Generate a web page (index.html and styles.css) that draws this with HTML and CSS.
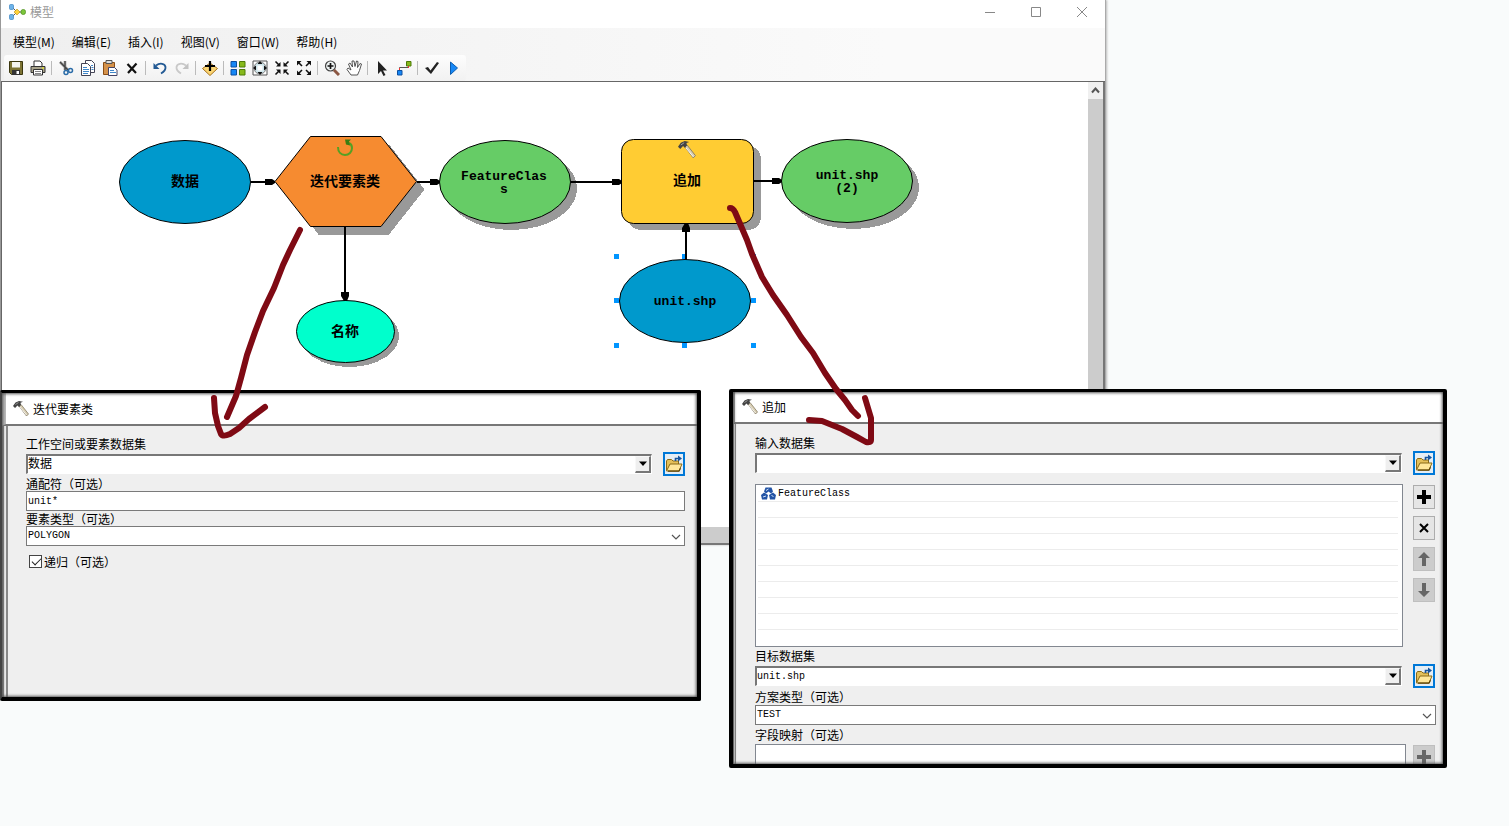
FILE: index.html
```html
<!DOCTYPE html>
<html lang="zh-CN">
<head>
<meta charset="utf-8">
<title>模型</title>
<link rel="stylesheet" href="styles.css">
</head>
<body>
<svg class="defs" width="0" height="0" aria-hidden="true">
  <symbol id="hammer" viewBox="0 0 16 16">
    <path d="M6 5l2-1.500 7.500 9.500-2 2z" fill="#d9cfb4" stroke="#857b63" stroke-width=".8"/>
    <path d="M7 6l6.500 8" stroke="#fff" stroke-width=".8"/>
    <path d="M0 5l2.500-3.500L6 0l4 .8-2.500 1L8 4 6 6 4.500 4.500 2 7z" fill="#444"/>
    <path d="M2.500 3.500l3-2" stroke="#aaa" stroke-width=".8"/>
  </symbol>
  <symbol id="folder" viewBox="0 0 18 18">
    <path d="M1.500 15.500V6l1-1.500h4L8 6h5.500v3" fill="#e4c05a" stroke="#8a6a16"/>
    <path d="M1.500 16L5 9h12l-3 7z" fill="#ffe79a" stroke="#8a6a16"/>
    <path d="M3 16.200h11l1.500-3" fill="none" stroke="#5d4408" stroke-width="1.200"/>
    <path d="M10.500 6V3.500H14" fill="none" stroke="#17549c" stroke-width="1.600"/>
    <path d="M13 .5l4 3-4 3z" fill="#17549c"/>
  </symbol>
  <symbol id="down" viewBox="0 0 10 6"><path d="M1 .5h8L5 5z" fill="#000"/></symbol>
  <symbol id="chevron" viewBox="0 0 10 6"><path d="M1 1l4 4 4-4" fill="none" stroke="#555" stroke-width="1.200"/></symbol>
</svg>

<main class="desktop">
  <section class="window" aria-label="模型">
    <header class="titlebar">
      <svg class="app-icon" width="17" height="16" viewBox="0 0 17 16">
        <path d="M3 3l5 5-5 5M8 8h6" fill="none" stroke="#555"/>
        <rect x=".5" y=".5" width="4" height="5" rx="1" fill="#6db3ea" stroke="#3c84c0" stroke-width=".7"/>
        <rect x=".5" y="10.500" width="4" height="5" rx="1" fill="#6db3ea" stroke="#3c84c0" stroke-width=".7"/>
        <path d="M8 5l3 3-3 3-3-3z" fill="#ffd23c" stroke="#b8901a" stroke-width=".6"/>
        <rect x="12" y="5.500" width="4.500" height="5" rx="2" fill="#7cc63b" stroke="#4b8c1a" stroke-width=".7"/>
      </svg>
      <h1 class="title muted">模型</h1>
      <div class="window-controls">
        <button aria-label="最小化"><svg width="12" height="12"><path d="M1 6.500h10" stroke="#888"/></svg></button>
        <button aria-label="最大化"><svg width="12" height="12"><path d="M1.500 1.500h9v9h-9z" fill="none" stroke="#888"/></svg></button>
        <button aria-label="关闭"><svg width="12" height="12"><path d="M1 1l10 10M11 1L1 11" stroke="#888"/></svg></button>
      </div>
    </header>
    <nav class="menubar">
      <button>模型(M)</button><button>编辑(E)</button><button>插入(I)</button><button>视图(V)</button><button>窗口(W)</button><button>帮助(H)</button>
    </nav>
    <div class="toolstrip">
    <div class="toolbar">
      <button aria-label="保存"><svg viewBox="0 0 16 16"><path d="M1.500 1.500h13v13h-11l-2-2z" fill="#7d7434" stroke="#3b370f"/><path d="M4 2h8v5.500H4z" fill="#f5f5f0"/><path d="M4 10h8v5H4z" fill="#333"/><path d="M8.500 11H11v3H8.500z" fill="#fff"/></svg></button>
      <button aria-label="打印"><svg viewBox="0 0 16 16"><path d="M4 7V1h6l2 2v4" fill="#fff" stroke="#333"/><path d="M1 6.500h14v6H1z" fill="#a9a48c" stroke="#333"/><path d="M3.500 9.500h9v5.500h-9z" fill="#fff" stroke="#333"/><path d="M5 11.500h6M5 13.500h6" stroke="#666" stroke-width=".8"/><path d="M12 8h2" stroke="#ff0"/></svg></button>
      <i class="sep"></i>
      <button aria-label="剪切"><svg viewBox="0 0 16 16"><path d="M2 2l8 8M7 1v9" stroke="#999" stroke-width="2.600"/><path d="M2 2l8 8M7 1v9" stroke="#444" stroke-width="1.200"/><circle cx="8" cy="12.500" r="2" fill="none" stroke="#2b6ca8" stroke-width="1.500"/><circle cx="12.500" cy="10.500" r="2" fill="none" stroke="#2b6ca8" stroke-width="1.500"/></svg></button>
      <button aria-label="复制"><svg viewBox="0 0 16 16"><path d="M5.500.5h6l3 3v9h-9z" fill="#fff" stroke="#445"/><path d="M1.500 3.500h6l3 3v9h-9z" fill="#fff" stroke="#445"/><path d="M3 7.500h4M3 9.500h6M3 11.500h6M3 13.500h5" stroke="#3f86c9"/><path d="M11 5.500h2M11.500 7.500h2M11.500 9.500h2" stroke="#3f86c9"/></svg></button>
      <button aria-label="粘贴"><svg viewBox="0 0 16 16"><path d="M1.500 2.500h11v12h-11z" fill="#d5924a" stroke="#8a4d14"/><path d="M4 .5h6v3H4z" fill="#ddd" stroke="#555"/><path d="M6.500 7.500h6l2.500 2.500v5.500H6.500z" fill="#fff" stroke="#446"/><path d="M8 10.500h4M8 12.500h6" stroke="#3f86c9"/></svg></button>
      <button aria-label="删除"><svg viewBox="0 0 16 16"><path d="M3.500 4L12 13M12.500 3.500L4 13" stroke="#111" stroke-width="2.200"/></svg></button>
      <i class="sep"></i>
      <button aria-label="撤消"><svg viewBox="0 0 16 16"><path d="M4 5.500c4-3 9-2 9.500 1.500.3 3-2 5-4.500 6.500" fill="none" stroke="#235a94" stroke-width="1.800"/><path d="M1.500 3v6h6z" fill="#235a94"/></svg></button>
      <button aria-label="恢复" disabled><svg viewBox="0 0 16 16"><path d="M12 5.500C8 2.500 3 3.500 2.500 7c-.3 3 2 5 4.500 6.500" fill="none" stroke="#c9c9c9" stroke-width="1.800"/><path d="M14.500 3v6h-6z" fill="#c2c2c2"/></svg></button>
      <i class="sep"></i>
      <button aria-label="添加数据"><svg viewBox="0 0 16 16"><path d="M8 3l7.500 5.500L8 15.500.5 8.500z" fill="#fbd572" stroke="#a5701d"/><path d="M8 1v10M3 6h10" stroke="#000" stroke-width="2.200"/></svg></button>
      <i class="sep"></i>
      <button aria-label="自动布局"><svg viewBox="0 0 16 16"><path d="M1 1.500h5.500V7H1zM1 9.500h5.500V15H1z" fill="#1687f5" stroke="#0c4fa0"/><path d="M9.500 1.500H15V7H9.500zM9.500 9.500H15V15H9.500z" fill="#86b91b" stroke="#4d7a08"/></svg></button>
      <button aria-label="全图"><svg viewBox="0 0 16 16"><path d="M1 1h14v14H1z" fill="#fff" stroke="#555"/><circle cx="8" cy="8" r="6" fill="#cfe5ea" stroke="#888"/><path d="M8 1l2.500 3h-5zM8 15l2.500-3h-5zM1 8l3-2.500v5zM15 8l-3-2.500v5z" fill="#111"/><path d="M5.500 5.500h5v5h-5z" fill="#fff"/></svg></button>
      <button aria-label="固定缩小"><svg viewBox="0 0 16 16"><path d="M1.500 1.500l4 4M14.500 1.500l-4 4M1.500 14.500l4-4M14.500 14.500l-4-4" stroke="#111" stroke-width="1.600"/><path d="M6.500 2v4.500H2zM9.500 2v4.500H14zM6.500 14V9.500H2zM9.500 14V9.500H14z" fill="#111"/></svg></button>
      <button aria-label="固定放大"><svg viewBox="0 0 16 16"><path d="M2 2l4 4M14 2l-4 4M2 14l4-4M14 14l-4-4" stroke="#111" stroke-width="1.600"/><path d="M1 1h4.500L1 5.500zM15 1h-4.500L15 5.500zM1 15h4.500L1 10.500zM15 15h-4.500l4.500-4.500z" fill="#111"/></svg></button>
      <i class="sep"></i>
      <button aria-label="放大"><svg viewBox="0 0 16 16"><circle cx="6.500" cy="6" r="5" fill="#eef3f3" stroke="#444" stroke-width="1.200"/><path d="M10 10l5 5" stroke="#8b5742" stroke-width="3"/><path d="M6.500 3v6M3.500 6h6" stroke="#111" stroke-width="1.700"/></svg></button>
      <button aria-label="平移"><svg viewBox="0 0 16 16"><path d="M5 15L1 9.500 2 8l3 2-2.500-6L4 3l2.500 4-.500-6L8 1l1 5.500L10.500 1l1.500.5-.500 6L14 3.500l1.500.5-2 6.500-2 4.500z" fill="#fff" stroke="#444" stroke-width=".9"/></svg></button>
      <i class="sep"></i>
      <button aria-label="选择"><svg viewBox="0 0 16 16"><path d="M4 1v13l3-3 2.500 5 2-1L9 10.500h4z" fill="#222"/></svg></button>
      <button aria-label="连接"><svg viewBox="0 0 16 16"><path d="M3.500 10V7.500h9V6" fill="none" stroke="#555"/><path d="M1.500 10.500H6V15H1.500z" fill="#1687f5" stroke="#0c4fa0"/><path d="M10.500 1.500H15V6h-4.500z" fill="#86b91b" stroke="#4d7a08"/><path d="M3.500 8v2M12.500 6v2" stroke="#e33" fill="none"/></svg></button>
      <i class="sep"></i>
      <button aria-label="验证"><svg viewBox="0 0 16 16"><path d="M1 8l3-1 2.500 3.500L13 2l2 1-8 11z" fill="#222"/></svg></button>
      <button aria-label="运行"><svg viewBox="0 0 16 16"><path d="M4.500 2l7 6-7 6.500z" fill="#1687f5" stroke="#0c5cae"/></svg></button>
    </div>
    </div>
    <div class="workspace">
      <div class="canvas">
        <svg class="diagram" width="100%" height="100%">
          <g transform="translate(-2 -82)">
            <g class="shadow">
              <path d="M283 189.500L318.500 144.500H389L424.500 189.500L389 234.500H318.500z"/>
              <ellipse cx="349.500" cy="336" rx="49.500" ry="31"/>
              <ellipse cx="511.500" cy="188.500" rx="65.500" ry="41.500"/>
              <rect x="628" y="146" width="133" height="84" rx="13"/>
              <ellipse cx="853.500" cy="187.500" rx="65.500" ry="41.500"/>
            </g>
            <g class="handles">
              <path d="M614 254h5v5h-5zM682 254h5v5h-5zM751 254h5v5h-5zM614 298h5v5h-5zM751 298h5v5h-5zM614 343h5v5h-5zM682 343h5v5h-5zM751 343h5v5h-5z"/>
            </g>
            <g class="shapes">
              <ellipse cx="185" cy="182" rx="65.500" ry="41.500" fill="#0099cc"/>
              <path d="M275 181.500L310.500 136.500H381L416.500 181.500L381 226.500H310.500z" fill="#f68b30"/>
              <ellipse cx="345.500" cy="331.500" rx="49" ry="31" fill="#00ffcc"/>
              <ellipse cx="505" cy="182" rx="65.500" ry="41.500" fill="#66cc66"/>
              <rect x="621.500" y="139.500" width="132" height="84" rx="12" fill="#ffcc33"/>
              <ellipse cx="847" cy="181" rx="65.500" ry="41.500" fill="#66cc66"/>
              <ellipse cx="685" cy="301" rx="65.500" ry="41.500" fill="#0099cc"/>
            </g>
            <g class="links">
              <path d="M251 182h18M417 182h18M571 182h45M754 181h22M345 227v66M686 260v-30"/>
            </g>
            <g class="heads">
              <path d="M275 181v2l-3 2h-7v-6h7zM440 181v2l-3 2h-7v-6h7zM622 181v2l-3 2h-7v-6h7zM782 180v2l-3 2h-7v-6h7zM344 301h3l2-5v-4h-8v4zM685 223h3l2 5v4h-8v-4z"/>
            </g>
            <path d="M338 147c0 5 3 8 7 8s7-3 7-7c0-3-1-4-3-5" fill="none" stroke="#55a024" stroke-width="2"/>
            <path d="M345 139.500h6l-2 2 1 4-4-1z" fill="#3b7d12"/>
            <use href="#hammer" x="678" y="141" width="18" height="18"/>
            <g class="cjk">
              <text x="185" y="186">数据</text>
              <text x="345" y="186">迭代要素类</text>
              <text x="345" y="336">名称</text>
              <text x="687" y="185">追加</text>
            </g>
            <g class="latin">
              <text x="504" y="180">FeatureClas</text>
              <text x="504" y="193">s</text>
              <text x="847" y="179">unit.shp</text>
              <text x="847" y="192">(2)</text>
              <text x="685" y="305">unit.shp</text>
            </g>
          </g>
        </svg>
      </div>
      <div class="vscroll">
        <button aria-label="向上滚动"><svg width="9" height="7"><path d="M1 5.500l3.500-4 3.500 4" fill="none" stroke="#555" stroke-width="2"/></svg></button>
        <div class="thumb"></div>
      </div>
      <div class="hscroll"></div>
    </div>
  </section>

  <section class="dialog iterate" aria-label="迭代要素类">
    <header class="dialog-title"><svg width="16" height="16"><use href="#hammer"/></svg><h2 class="title">迭代要素类</h2></header>
    <form class="form">
      <label class="tall" for="ws">工作空间或要素数据集</label>
      <div class="row">
        <div class="combo"><input class="zh" id="ws" value="数据"><button type="button" aria-label="展开"><svg width="10" height="6"><use href="#down"/></svg></button></div>
        <button class="browse" type="button" aria-label="浏览"><svg width="18" height="18"><use href="#folder"/></svg></button>
      </div>
      <label for="wild">通配符（可选）</label>
      <input class="field" id="wild" value="unit*">
      <label for="ftype">要素类型（可选）</label>
      <div class="select"><select class="field" id="ftype"><option>POLYGON</option></select><svg width="10" height="6"><use href="#chevron"/></svg></div>
      <div class="check"><input type="checkbox" id="rec" checked><label for="rec">递归（可选）</label></div>
    </form>
  </section>

  <section class="dialog append" aria-label="追加">
    <header class="dialog-title"><svg width="16" height="16"><use href="#hammer"/></svg><h2 class="title">追加</h2></header>
    <form class="form">
      <label class="tall" for="in">输入数据集</label>
      <div class="row">
        <div class="combo"><input id="in" value=""><button type="button" aria-label="展开"><svg width="10" height="6"><use href="#down"/></svg></button></div>
        <button class="browse" type="button" aria-label="浏览"><svg width="18" height="18"><use href="#folder"/></svg></button>
      </div>
      <div class="list-row">
        <ul class="list">
          <li><svg width="15" height="13" viewBox="0 0 15 13"><path d="M4.500.5h6l1.500 4-2 2-2.500-2-2.500 2-2-2zM0 8l3-2.500L7 8l-1 4.500H1zM15 8l-3-2.500L8 8l1 4.500h5z" fill="#2354a6"/><path d="M5 3.500l2.500-1.500M2 10l3-1M10.500 8l2 2" stroke="#cfe0f7"/></svg>FeatureClass</li>
          <li></li><li></li><li></li><li></li><li></li><li></li><li></li><li></li><li></li>
        </ul>
        <div class="list-tools">
          <button type="button" aria-label="添加"><svg width="16" height="16"><path d="M8 1v14M1 8h14" stroke="#000" stroke-width="4"/></svg></button>
          <button type="button" aria-label="移除"><svg width="16" height="16"><path d="M4 4l8 8M12 4l-8 8" stroke="#000" stroke-width="2"/></svg></button>
          <button type="button" aria-label="上移" disabled><svg width="16" height="16"><path d="M8 1l6 6H10v8H6V7H2z" fill="#666"/></svg></button>
          <button type="button" aria-label="下移" disabled><svg width="16" height="16"><path d="M8 15l6-6H10V1H6v8H2z" fill="#666"/></svg></button>
        </div>
      </div>
      <label class="tall" for="target">目标数据集</label>
      <div class="row">
        <div class="combo"><input id="target" value="unit.shp"><button type="button" aria-label="展开"><svg width="10" height="6"><use href="#down"/></svg></button></div>
        <button class="browse" type="button" aria-label="浏览"><svg width="18" height="18"><use href="#folder"/></svg></button>
      </div>
      <label class="tall" for="schema">方案类型（可选）</label>
      <div class="select"><select class="field" id="schema"><option>TEST</option></select><svg width="10" height="6"><use href="#chevron"/></svg></div>
      <label class="taller" for="map">字段映射（可选）</label>
      <div class="map-row">
        <textarea class="map" id="map"></textarea>
        <div class="list-tools"><button type="button" aria-label="添加字段" disabled><svg width="16" height="16"><path d="M8 1v14M1 8h14" stroke="#666" stroke-width="4"/></svg></button></div>
      </div>
    </form>
  </section>

  <svg class="ink" width="100%" height="100%" aria-hidden="true">
    <path d="M300 230L290 250L283 265L274 288L263 311L255 332L247 355L241 378L236 396L227 417"/>
    <path d="M214 398L215 413L218 426L221 434Q223 437 230 434L239 428L249 419L265 407"/>
    <path d="M730 208Q733 208 735 212L747 240L752 254L762 277L773 295L787 315L801 337L813 353L825 373L836 389L845 400L852 410L858 416"/>
    <path d="M809 420L822 421L842 429L857 437L866 442Q871 443 871 440V418L868 408L865 398"/>
  </svg>
</main>
</body>
</html>
```
FILE: styles.css
```css
* { box-sizing: border-box; }
body {
  margin: 0;
  background: #f9fbfb;
  color: #000;
  font: 12px/16px "Noto Sans CJK SC", sans-serif;
}
button, input, select, textarea { font: inherit; color: inherit; margin: 0; padding: 0; border-radius: 0; outline: 0; }
button { display: flex; align-items: center; justify-content: center; border: 0; background: none; }
svg { flex: none; }
.defs { position: absolute; }
.desktop { position: relative; min-height: 100vh; overflow: hidden; }
.title { margin: 0; font-size: 12px; font-weight: 400; }
.muted { color: #999; }

.window {
  position: absolute;
  top: 0;
  left: 0;
  display: flex;
  flex-direction: column;
  width: calc(100% - 403px);
  height: 66vh;
  border-left: 1px solid #999;
  border-right: 1px solid #aaa;
  background: #fafafa;
  box-shadow: 1px 0 2px #bbb;
}
.titlebar { display: flex; align-items: center; gap: 4px; height: 28px; padding: 0 11px 4px 8px; background: #fff; }
.window-controls { display: flex; gap: 22px; margin-left: auto; }
.window-controls button { width: 24px; height: 24px; }
.menubar {
  display: flex;
  gap: 17px;
  height: 27px;
  padding-left: 12px;
  background: linear-gradient(90deg, #efefef, #fafafa 80%);
}
.toolstrip { background: linear-gradient(90deg, #efefef, #fafafa 80%); border-bottom: 1px solid #666; }
.toolbar {
  display: flex;
  align-items: center;
  width: max-content;
  height: 26px;
  margin-left: 3px;
  padding: 0 1px;
  background: linear-gradient(#fdfdfd, #f1f1f1);
  border-radius: 3px;
}
.toolbar button { width: 22px; height: 22px; }
.toolbar svg { width: 16px; height: 16px; }
.sep { width: 1px; height: 14px; margin: 0 3px 0 2px; background: #bbb; }

.workspace {
  display: grid;
  flex: 1;
  grid-template: 1fr 16px / 1fr 15px;
  border-left: 1px solid #666;
  border-right: 2px solid #777;
  border-bottom: 2px solid #777;
  background: #ccc;
}
.canvas { position: relative; background: #fff; }
.diagram { position: absolute; inset: 0; }
.vscroll { display: flex; flex-direction: column; background: #f0f0f0; }
.vscroll button { height: 17px; }
.thumb { flex: 1; background: #ccc; }
.hscroll { background: #ccc; }

.shadow { fill: #999; shape-rendering: crispEdges; }
.handles { fill: #0095ff; }
.links { stroke: #000; stroke-width: 2; fill: none; shape-rendering: crispEdges; }
.heads { fill: #000; }
.shapes { stroke: #000; }
.cjk, .latin { font-weight: 700; text-anchor: middle; }
.cjk { font-size: 14px; }
.latin { font-family: "Liberation Mono", monospace; font-size: 13px; }

.dialog {
  position: absolute;
  display: flex;
  flex-direction: column;
  overflow: hidden;
  border: 4px solid #000;
  border-top-width: 3px;
  border-radius: 2px;
  background: #efefef;
}
.dialog::after {
  content: "";
  position: absolute;
  inset: 0;
  pointer-events: none;
  box-shadow: inset 0 0 3px 1px #555;
}
.iterate { top: 390px; left: 0; width: 701px; border-left: 2px solid #444; }
.append { top: 389px; left: 729px; width: calc(100% - 791px); height: 379px; }
.dialog-title {
  display: flex;
  align-items: center;
  gap: 4px;
  flex: none;
  height: 32px;
  border-bottom: 2px solid #777;
  background: #fff;
}
.iterate .dialog-title { height: 33px; padding-left: 7px; border-left: 4px solid #bbb; }
.append .dialog-title { padding-left: 7px; border-left: 2px solid #999; }
.iterate .form { padding: 9px 12px 128px 18px; border-left: 6px double #888; }
.append .form { padding: 10px 7px 0 19px; border-left: 3px double #888; }
.form { display: flex; flex-direction: column; }
.form label { line-height: 15px; }
.form .tall { line-height: 17px; }
.form .taller { line-height: 19px; }
.row { display: flex; align-items: center; justify-content: space-between; gap: 11px; }
.append .row, .append .list-row, .append .map-row { padding-right: 1px; }
.combo {
  display: flex;
  flex: 1;
  height: 20px;
  border: 1px solid #fff;
  border-top: 2px solid #777;
  border-left: 2px solid #777;
  background: #fff;
}
.combo input { flex: 1; min-width: 0; border: 0; background: none; }
.combo button { width: 16px; border: 1px solid #f8f8f8; border-right: 2px solid #777; border-bottom: 2px solid #777; background: #efefef; }
.combo input, .field, .map, .list { font-family: "Liberation Mono", "Noto Sans CJK SC", monospace; font-size: 10px; }
.combo .zh { font-size: 12px; line-height: 16px; }
.browse { width: 22px; height: 24px; border: 2px solid #0078d7; background: #e5eef5; }
.field { width: 100%; height: 20px; padding: 0 1px; border: 1px solid #7a7a7a; background: #fff; }
.select { position: relative; display: flex; }
.select select { appearance: none; }
.select svg { position: absolute; top: 8px; right: 4px; pointer-events: none; }
.check { display: flex; align-items: center; gap: 2px; height: 16px; margin-top: 7px; padding-left: 3px; }
.check input { width: 13px; height: 13px; appearance: none; border: 1px solid #444; background: #fff; }
.check input:checked::before {
  content: "";
  display: block;
  width: 8px;
  height: 4px;
  margin: 2px 0 0 2px;
  border-left: 1px solid #222;
  border-bottom: 1px solid #222;
  transform: rotate(-45deg);
}
.list-row { display: flex; gap: 10px; height: 163px; margin-top: 9px; }
.list { flex: 1; margin: 0; padding: 1px 4px 0 2px; overflow: hidden; list-style: none; border: 1px solid #828790; background: #fff; }
.list li { display: flex; align-items: center; gap: 2px; height: 16px; padding-left: 3px; border-bottom: 1px solid #ececec; }
.list li:last-child { border: 0; }
.list-tools { display: flex; flex-direction: column; gap: 7px; padding-top: 1px; }
.list-tools button { width: 22px; height: 24px; border: 1px solid #adadad; background: #e5e5e5; }
.list-tools button:disabled { border-color: #bfbfbf; background: #ccc; }
.map-row { display: flex; gap: 7px; }
.map { flex: 1; height: 60px; resize: none; border: 1px solid #828790; background: #fff; }
.ink { position: absolute; inset: 0; pointer-events: none; fill: none; stroke: #7f0a14; stroke-width: 6; stroke-linecap: round; stroke-linejoin: round; }
```
